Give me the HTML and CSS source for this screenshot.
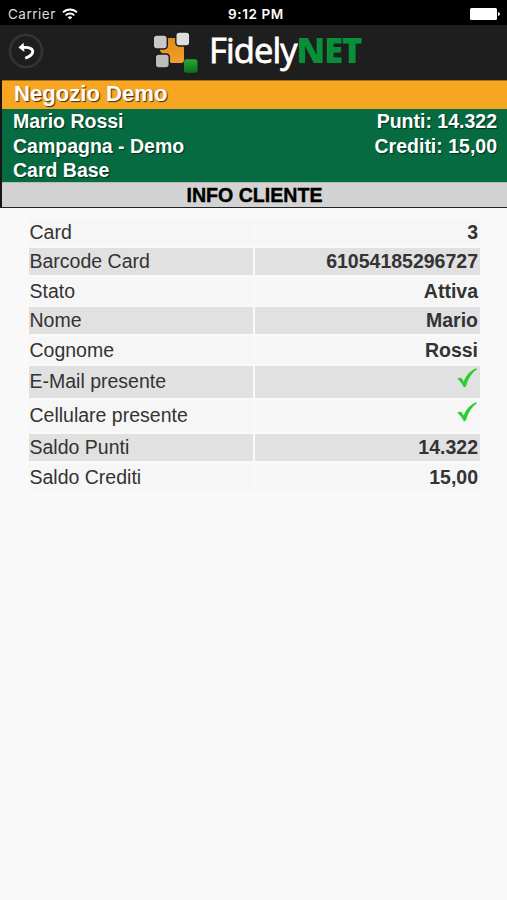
FILE: index.html
```html
<!DOCTYPE html>
<html lang="it">
<head>
    <meta charset="UTF-8">
    <meta name="viewport" content="width=device-width, initial-scale=1.0">
    <title>FidelyNET - Info Cliente</title>
    <link rel="stylesheet" href="styles.css">
</head>
<body>
    <div class="status-bar">
        <div class="carrier">
            <span class="carrier-name">Carrier</span>
            <svg class="wifi" width="16" height="12" viewBox="0 0 16 12">
                <g fill="none" stroke="#fff" stroke-width="1.9">
                    <path d="M1 4.4a10 10 0 0 1 14 0"/>
                    <path d="M3.7 7.3a6.1 6.1 0 0 1 8.6 0"/>
                </g>
                <path d="M8 11.6L5.7 9.3a3.3 3.3 0 0 1 4.6 0z" fill="#fff"/>
            </svg>
        </div>
        <div class="clock">9:12 PM</div>
        <div class="battery">
            <svg width="30" height="12" viewBox="0 0 30 12" fill="#fff">
                <rect width="27" height="12" rx="1.5"/>
                <path d="M28 4q2 .5 2 2t-2 2z"/>
            </svg>
        </div>
    </div>

    <header class="navbar">
        <button class="back-button" aria-label="Indietro">
            <svg width="36" height="36" viewBox="0 0 36 36" fill="none">
                <circle cx="18" cy="18" r="16" stroke="#343434" stroke-width="2.6"/>
                <path d="M14 14.6C22 13.6 25.5 16.4 24.6 19.5Q23.6 23 17.2 25.2" stroke="#fff" stroke-width="2.8"/>
                <path d="M10.5 14.4L15.6 9.8L16.4 19Z" fill="#fff"/>
            </svg>
        </button>
        <div class="logo">
            <svg width="46" height="44" viewBox="0 0 46 44">
                <defs>
                    <linearGradient id="orange" x1="0" y1="0" x2="0" y2="1">
                        <stop offset="0" stop-color="#e18b1c"/>
                        <stop offset="1" stop-color="#f0a02c"/>
                    </linearGradient>
                    <linearGradient id="green" x1="0" y1="0" x2="0" y2="1">
                        <stop offset="0" stop-color="#2da535"/>
                        <stop offset="1" stop-color="#08721b"/>
                    </linearGradient>
                </defs>
                <path d="M14 7h14l3 7v15q0 3-3 3H18L7 20v-6z" fill="url(#orange)"/>
                <g stroke="#1b1b1b" stroke-width="1.4">
                    <rect x=".3" y="4" width="14" height="14" rx="3.4" fill="#c8c8c8"/>
                    <rect x="22.8" y="1" width="14" height="14" rx="3.4" fill="#dedede"/>
                    <rect x="2.3" y="23" width="14" height="14" rx="3.4" fill="#bcbcbc"/>
                </g>
                <rect x="31" y="28.2" width="13.5" height="13.5" rx="2.5" fill="url(#green)"/>
            </svg>
            <div class="logo-text"><span class="fidely">Fidely</span><span class="net">NET</span></div>
        </div>
    </header>

    <div class="panel">
        <div class="shop-name">Negozio Demo</div>
        <div class="customer">
            <div>
                <p>Mario Rossi</p>
                <p>Campagna - Demo</p>
                <p>Card Base</p>
            </div>
            <div class="balances">
                <p>Punti: 14.322</p>
                <p>Crediti: 15,00</p>
            </div>
        </div>
        <h1 class="page-title">INFO CLIENTE</h1>
    </div>

    <div class="info">
        <div class="row"><span>Card</span><strong>3</strong></div>
        <div class="row"><span>Barcode Card</span><strong>61054185296727</strong></div>
        <div class="row"><span>Stato</span><strong>Attiva</strong></div>
        <div class="row"><span>Nome</span><strong>Mario</strong></div>
        <div class="row"><span>Cognome</span><strong>Rossi</strong></div>
        <div class="row tall">
            <span>E-Mail presente</span>
            <strong>
                <svg class="check" width="20" height="20" viewBox="0 0 20 20">
                    <path d="M.2 10.8L3.4 9.6Q5.4 10.8 6.6 13.4Q10.4 3.6 19 .2L20 1.2Q12.4 6 9 18.2L6.9 19.6Q4 13.4 .2 10.8Z" fill="#27cf2f"/>
                </svg>
            </strong>
        </div>
        <div class="row tall">
            <span>Cellulare presente</span>
            <strong>
                <svg class="check" width="20" height="20" viewBox="0 0 20 20">
                    <path d="M.2 10.8L3.4 9.6Q5.4 10.8 6.6 13.4Q10.4 3.6 19 .2L20 1.2Q12.4 6 9 18.2L6.9 19.6Q4 13.4 .2 10.8Z" fill="#27cf2f"/>
                </svg>
            </strong>
        </div>
        <div class="row"><span>Saldo Punti</span><strong>14.322</strong></div>
        <div class="row"><span>Saldo Crediti</span><strong>15,00</strong></div>
    </div>
</body>
</html>
```

FILE: styles.css
```css
* {
    margin: 0;
    padding: 0;
    box-sizing: border-box;
}

body {
    min-height: 100vh;
    background: #f9f9f9;
    font-family: "Liberation Sans", Arial, sans-serif;
    font-size: 19.5px;
    color: #333;
}

/* Status bar */
.status-bar {
    display: grid;
    grid-template-columns: 1fr auto 1fr;
    align-items: center;
    height: 25px;
    padding: 2px 7px 0 8px;
    background: #000;
    color: #fff;
    font-family: Inter, sans-serif;
    font-size: 13px;
}

.carrier {
    display: flex;
    align-items: center;
    gap: 6px;
    color: #ddd;
}

.carrier-name {
    font-size: 13.5px;
    letter-spacing: 0.5px;
}

.clock {
    padding-left: 4px;
    font-weight: 600;
    font-size: 13.5px;
    letter-spacing: 0.6px;
}

.battery {
    display: flex;
    justify-content: flex-end;
}

/* Top bar */
.navbar {
    display: flex;
    align-items: center;
    height: 55px;
    padding-left: 8px;
    background: #1e1e1e;
}

.back-button {
    width: 36px;
    height: 36px;
    margin-bottom: 4px;
    background: none;
    border: none;
    cursor: pointer;
}

.logo {
    display: flex;
    align-items: center;
    gap: 10px;
    margin-left: 109px;
}

.logo-text {
    font-family: "Open Sans", "Noto Sans", sans-serif;
    font-size: 34.5px;
    line-height: 44px;
    margin-top: -6px;
    white-space: nowrap;
}

.fidely {
    color: #fff;
    letter-spacing: -0.9px;
    -webkit-text-stroke: 0.8px #fff;
}

.net {
    color: #079039;
    font-weight: 800;
    letter-spacing: -1.2px;
}

/* Shop and customer */
.panel {
    border-left: 2px solid #161616;
    font-weight: bold;
}

.shop-name {
    height: 29px;
    padding-left: 12px;
    border-top: 1px solid #a96d14;
    background: #f7a621;
    color: #fff;
    font-size: 22.1px;
    line-height: 26px;
    text-shadow: 1px 1px 1px #3d2c0e;
}

.customer {
    display: flex;
    justify-content: space-between;
    height: 73px;
    padding: 0 10px 0 11px;
    background: #076b42;
    color: #fff;
    line-height: 24.5px;
    text-shadow: 1px 1px 1px #02301c;
}

.balances {
    text-align: right;
}

.page-title {
    height: 26px;
    border-top: 1px solid #b5bdb8;
    border-bottom: 1px solid #222;
    background: #d3d3d3;
    color: #000;
    font-size: 19.6px;
    line-height: 24px;
    text-align: center;
    -webkit-text-stroke: 0.4px #000;
}

/* Info table */
.info {
    display: grid;
    gap: 2.4px;
    padding: 11px 27.5px 0 28.5px;
}

.row {
    display: grid;
    grid-template-columns: 1fr 1fr;
    gap: 2.4px;
    height: 27px;
    line-height: 26px;
}

.row.tall {
    height: 31.8px;
    line-height: 31px;
}

.row span,
.row strong {
    height: 100%;
    padding: 0 1.5px 0 1px;
    background: #f6f6f6;
}

.row strong {
    text-align: right;
}

.row:nth-child(even) span,
.row:nth-child(even) strong {
    background: #e1e1e1;
}

.check {
    display: block;
    margin: 2px 1.5px 0 auto;
}
```
